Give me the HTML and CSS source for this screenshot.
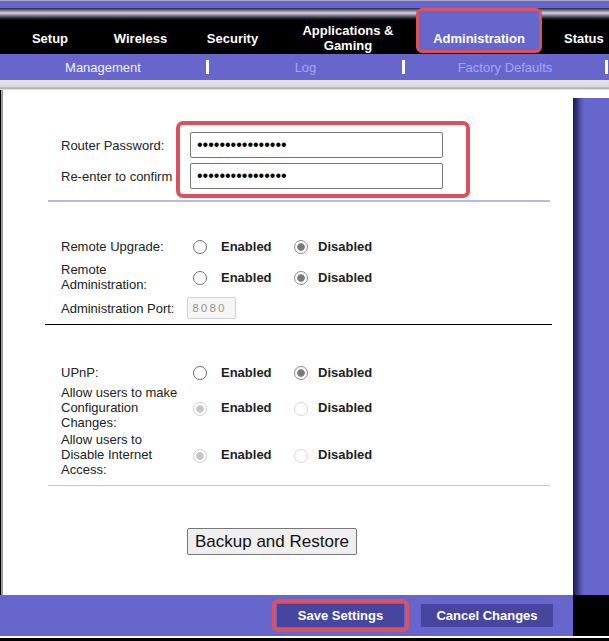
FILE: index.html
```html
<!DOCTYPE html>
<html lang="en">
<head>
<meta charset="utf-8">
<title>Administration - Management</title>
<link rel="stylesheet" href="styles.css">
</head>
<body>
<div class="page">
  <div class="topband"></div>
  <nav class="tabs">
    <div class="tab tab-setup">Setup</div>
    <div class="tab tab-wireless">Wireless</div>
    <div class="tab tab-security">Security</div>
    <div class="tab tab-apps">Applications &amp;<br>Gaming</div>
    <div class="tab tab-admin">Administration</div>
    <div class="tab tab-status">Status</div>
  </nav>
  <div class="subnav">
    <div class="sub sub-mgmt active">Management</div>
    <span class="sep"></span>
    <div class="sub sub-log">Log</div>
    <span class="sep"></span>
    <div class="sub sub-factory">Factory Defaults</div>
    <span class="sep"></span>
  </div>
  <div class="greyband"></div>
  <div class="main">
    <div class="content">
      <div class="sec sec-pass">
        <label class="lbl">Router Password:</label>
        <input class="pw" type="password" value="abcdefghijklmnop" readonly>
        <label class="lbl">Re-enter to confirm</label>
        <input class="pw" type="password" value="abcdefghijklmnop" readonly>
        <div class="callout"></div>
      </div>

      <div class="sec sec-remote">
        <div class="lbl">Remote Upgrade:</div>
        <div class="opts">
          <label class="opt"><input class="radio" type="radio" name="ru"><span>Enabled</span></label>
          <label class="opt"><input class="radio" type="radio" name="ru" checked><span>Disabled</span></label>
        </div>
        <div class="lbl">Remote Administration:</div>
        <div class="opts">
          <label class="opt"><input class="radio" type="radio" name="ra"><span>Enabled</span></label>
          <label class="opt"><input class="radio" type="radio" name="ra" checked><span>Disabled</span></label>
        </div>
        <div class="lbl nowrap">Administration Port:</div>
        <div class="opts"><input class="port" type="text" value="8080" readonly></div>
      </div>

      <div class="sec sec-upnp">
        <div class="lbl">UPnP:</div>
        <div class="opts">
          <label class="opt"><input class="radio" type="radio" name="up"><span>Enabled</span></label>
          <label class="opt"><input class="radio" type="radio" name="up" checked><span>Disabled</span></label>
        </div>
        <div class="lbl">Allow users to make Configuration Changes:</div>
        <div class="opts">
          <label class="opt"><input class="radio" type="radio" name="cc" checked disabled><span>Enabled</span></label>
          <label class="opt"><input class="radio" type="radio" name="cc" disabled><span>Disabled</span></label>
        </div>
        <div class="lbl">Allow users to Disable Internet Access:</div>
        <div class="opts">
          <label class="opt"><input class="radio" type="radio" name="ia" checked disabled><span>Enabled</span></label>
          <label class="opt"><input class="radio" type="radio" name="ia" disabled><span>Disabled</span></label>
        </div>
      </div>

      <button class="backup" type="button">Backup and Restore</button>
    </div>
    <div class="side"></div>
  </div>
  <div class="actions">
    <div class="actions-bar">
      <div class="hl"><button class="btn btn-save" type="button">Save Settings</button></div>
      <button class="btn btn-cancel" type="button">Cancel Changes</button>
    </div>
    <div class="actions-end"></div>
  </div>
  <div class="bottomline"></div>
</div>
</body>
</html>
```
FILE: styles.css
```css
* { box-sizing: border-box; }
html, body { margin: 0; padding: 0; }
body {
  background: #000;
  width: 609px;
  height: 641px;
  overflow: hidden;
  font-family: "Liberation Sans", Arial, sans-serif;
  font-size: 13px;
}
.page { width: 609px; }

.topband {
  height: 8px;
  background: #6666cc;
  border-top: 1px solid #a8a8c8;
}

.tabs {
  display: flex;
  height: 46px;
  background: linear-gradient(#20204a 0, #8a8a9a 3px, #d4d4dc 5px, #6a6a78 8px, #101018 11px, #000 13px);
}
.tab {
  display: flex;
  align-items: center;
  justify-content: center;
  padding-top: 14px;
  color: #fff;
  font-weight: bold;
  text-align: center;
  line-height: 15px;
}
.tab-setup { width: 100px; }
.tab-wireless { width: 81px; }
.tab-security { width: 103px; }
.tab-apps { width: 128px; }
.tab-admin {
  width: 126px;
  height: 45px;
  margin-left: 4px;
  background: #6666cc;
  border: 3px solid #d9525e;
  border-radius: 6px;
  padding-top: 15px;
}
.tab-status { width: 67px; justify-content: flex-start; padding-left: 22px; }

.subnav {
  display: flex;
  align-items: center;
  height: 26px;
  background: #6666cc;
}
.sub { text-align: center; color: #a6a6f0; }
.sub.active { color: #f2f2fa; }
.sub-mgmt { width: 206px; }
.sub-log { width: 193px; }
.sub-factory { width: 200px; }
.sep { width: 3px; height: 14px; background: #fff; }

.greyband {
  height: 10px;
  background: linear-gradient(#e4e4e6 0, #d8d8da 7px, #a4a4a4 8px, #c8c8c8 9px, #f0f0f0 10px);
}

.main { display: flex; height: 505px; }
.content {
  flex: 1;
  background: #fff;
  border-left: 2px solid #9a9a9a;
  margin-left: 1px;
}
.side {
  width: 36px;
  border-top: 8px solid #fff;
  background: linear-gradient(to right, #1c1c48 0, #34347e 4px, #5656b4 8px, #6666cc 11px, #6666cc 100%);
}

.sec { display: grid; align-items: center; }
.lbl { color: #222; line-height: 15px; }
.nowrap { white-space: nowrap; }

.sec-pass {
  position: relative;
  margin: 42px 23px 0 45px;
  padding: 0 0 11px 13px;
  border-bottom: 2px solid #bcb7de;
  grid-template-columns: 129px 253px;
  grid-auto-rows: 26px;
  row-gap: 5px;
}
.sec-pass .lbl { white-space: nowrap; }
.pw {
  width: 253px;
  height: 26px;
  border: 1px solid #767676;
  border-radius: 2px;
  padding: 0 6px;
  font-family: "Liberation Sans", Arial, sans-serif;
  font-size: 16px;
  color: #000;
  background: #fff;
  outline: none;
}
.callout {
  position: absolute;
  left: 128px;
  top: -11px;
  width: 294px;
  height: 77px;
  border: 4px solid #d9525e;
  border-radius: 7px;
  pointer-events: none;
}

.sec-remote {
  margin: 0 21px 0 42px;
  padding: 33px 0 5px 16px;
  border-bottom: 1px solid #000;
  grid-template-columns: 126px auto;
  grid-auto-rows: minmax(22px, auto);
  row-gap: 5px;
}
.sec-upnp {
  margin: 0 23px 0 45px;
  padding: 36px 0 8px 13px;
  border-bottom: 1px solid #c4c4cc;
  grid-template-columns: 126px auto;
  grid-auto-rows: minmax(22px, auto);
  row-gap: 2px;
}
.sec-remote .lbl, .sec-upnp .lbl { padding-right: 4px; }

.opts { display: flex; align-items: center; }
.opt { display: flex; align-items: center; padding-left: 6px; }
.opt:first-child { width: 101px; }
.opt span { margin-left: 14px; font-weight: bold; color: #222; }
.opt + .opt span { margin-left: 10px; }

.radio {
  -webkit-appearance: none;
  appearance: none;
  width: 14px;
  height: 14px;
  margin: 2px 0 0 0;
  border: 1px solid #6f6f6f;
  border-radius: 50%;
  background: #fff;
}
.radio:checked {
  border-color: #8a8a8a;
  background: radial-gradient(circle, #7a7a7a 0, #7a7a7a 3.4px, #fff 4.2px);
}
.radio:disabled { border-color: #d6d6d6; }
.radio:disabled:checked {
  border-color: #cdcdcd;
  background: radial-gradient(circle, #c6c6c6 0, #c6c6c6 3.4px, #fff 4.2px);
}

.port {
  width: 49px;
  height: 22px;
  border: 1px solid #d0d0d0;
  border-radius: 2px;
  background: #f6f6f6;
  color: #999;
  font-family: "DejaVu Sans", sans-serif;
  font-size: 11px;
  letter-spacing: 1.6px;
  padding: 0 4px;
  outline: none;
}

.backup {
  display: block;
  margin: 42px 0 0 184px;
  width: 170px;
  height: 27px;
  padding: 0;
  border: 1px solid #767676;
  border-radius: 2px;
  background: #efefef;
  color: #111;
  font-family: "Liberation Sans", Arial, sans-serif;
  font-size: 17px;
}

.actions { display: flex; height: 41px; }
.actions-bar {
  width: 573px;
  background: #6666cc;
  display: flex;
  align-items: center;
  justify-content: flex-end;
  padding-right: 20px;
}
.actions-end { flex: 1; background: #000; }
.hl {
  border: 4px solid #d9525e;
  border-radius: 6px;
  padding: 1px;
}
.btn {
  display: block;
  height: 23px;
  border: 0;
  padding: 0;
  background: #46469e;
  color: #fff;
  font-family: "Liberation Sans", Arial, sans-serif;
  font-weight: bold;
  font-size: 13px;
}
.btn-save { width: 127px; }
.btn-cancel { width: 132px; margin-left: 12px; }

.bottomline { height: 2px; background: #fff; }
```
